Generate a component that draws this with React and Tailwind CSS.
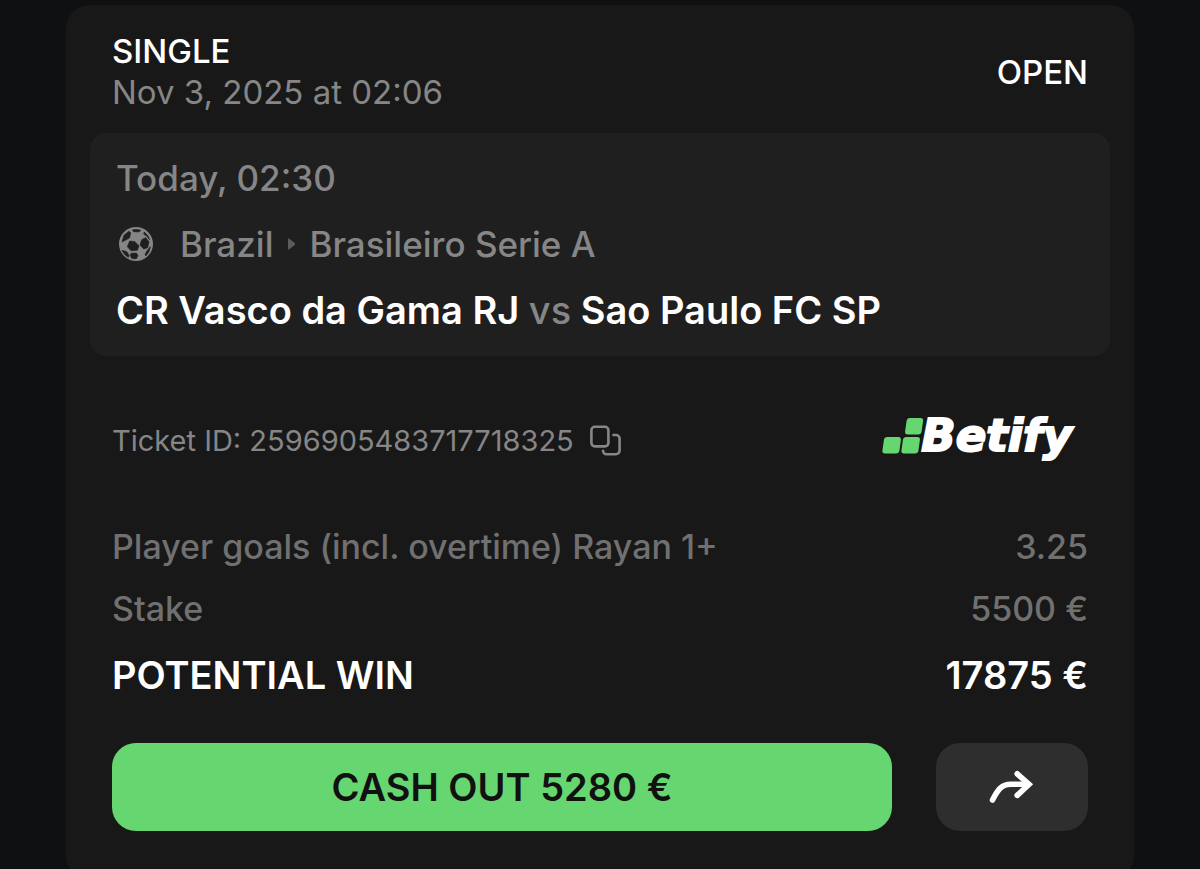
import React from "react";

const bet = {
  type: "SINGLE",
  placedAt: "Nov 3, 2025 at 02:06",
  status: "OPEN",
  startsAt: "Today, 02:30",
  country: "Brazil",
  league: "Brasileiro Serie A",
  home: "CR Vasco da Gama RJ",
  away: "Sao Paulo FC SP",
  ticketId: "2596905483717718325",
  market: "Player goals (incl. overtime) Rayan 1+",
  odds: "3.25",
  stake: "5500 €",
  win: "17875 €",
  cashOut: "5280 €",
};

const BallIcon = () => (
  <svg className="size-10" viewBox="13 9 120 120" aria-hidden="true">
    <circle cx="73" cy="69" r="51" fill="currentColor" />
    {/* light panels of the ball */}
    <g fill="#1f1f1f" stroke="#1f1f1f" strokeWidth="2" strokeLinejoin="round">
      <path d="M54 60 70 62 82 75 77 88 58 89 47 77z" />
      <path d="M90 56 102 50 112 62 108 80 96 84 85 72z" />
      <path d="M37 43 51 31 57 35 54 50 41 58 31 63z" />
      <path d="M62 27Q74 23 88 28L80 33 66 32z" />
      <path d="M98 33Q110 43 114 56L104 44 96 39z" />
      <path d="M31 88 45 92 52 103 50 109Q37 102 31 88z" />
      <path d="M58 97 74 96 79 104 74 113Q66 114 60 112L56 104z" />
      <path d="M106 90 116 77Q114 94 102 105L101 98z" />
    </g>
  </svg>
);

const CopyIcon = () => (
  <svg className="h-9 w-8" viewBox="0 0 32 36" fill="none" stroke="currentColor" strokeWidth="2.6" strokeLinecap="round" aria-hidden="true">
    <rect x="1.4" y="3.8" width="17" height="19.6" rx="3.4" />
    <path d="M23.4 12H26a3.6 3.6 0 0 1 3.6 3.6v12a3.6 3.6 0 0 1-3.6 3.6H16.6a3.6 3.6 0 0 1-3.6-3.4" />
  </svg>
);

const ShareIcon = () => (
  <svg className="h-9 w-12" viewBox="0 0 48 36" fill="none" stroke="currentColor" strokeWidth="5.6" strokeLinecap="round" strokeLinejoin="miter" aria-hidden="true">
    <path d="M4.5 31C9.5 21.5 13 15.3 23 15.3H40" />
    <path d="M29.2 4.8 41 15.3 29.2 26.4" />
  </svg>
);

const Logo = () => (
  <div className="flex items-center pr-4 pb-[10px] text-white">
    <svg className="h-9 w-10 overflow-visible" viewBox="0 0 40 36" fill="#66d670" aria-hidden="true">
      <g transform="translate(6 0) skewX(-8)">
        <rect x="20" y="0" width="16.5" height="16.5" rx="3" />
        <rect x="0" y="19" width="17" height="16.5" rx="3" />
        <rect x="19" y="19" width="17" height="16.5" rx="3" />
      </g>
    </svg>
    <span className="font-['DejaVu_Sans','Inter',sans-serif] text-[45px] leading-12 font-bold italic [-webkit-text-stroke:2px_#fff]">
      Betify
    </span>
  </div>
);

const App = () => {
  return (
    <div className="h-screen overflow-hidden bg-[#0f1012] px-4 pt-[5px] font-['Inter','Liberation_Sans',sans-serif] text-[34px] leading-10 text-[#868686] sm:px-[66px]">
      <main className="rounded-3xl bg-[#181818] px-6 pt-[26px] pb-12">
        <header className="flex items-center justify-between px-[22px] text-[33px] leading-[41px] font-medium">
          <div>
            <h1 className="text-white">{bet.type}</h1>
            <p className="font-normal">{bet.placedAt}</p>
          </div>
          <span className="text-white">{bet.status}</span>
        </header>

        <section className="mt-5 flex flex-col gap-[26px] rounded-2xl bg-[#1f1f1f] px-[26px] pt-[25px] pb-[26px] text-[35px] font-medium">
          <p>{bet.startsAt}</p>
          <div className="flex items-center">
            <BallIcon />
            <span className="ml-6">{bet.country}</span>
            <svg className="mx-3 h-3 w-3" viewBox="0 0 12 12" fill="#5c5c5c" aria-hidden="true">
              <path d="M3 1.2v9.6q0 1.2 1 .6L9.6 7q1-1 0-2L4 .6Q3 0 3 1.2z" />
            </svg>
            <span>{bet.league}</span>
          </div>
          <h2 className="text-[38px] font-semibold text-white">
            {bet.home} <span className="font-medium text-[#868686]">vs</span> {bet.away}
          </h2>
        </section>

        <div className="mt-[61px] flex h-12 items-center justify-between px-[22px]">
          <div className="flex items-center gap-4 text-[29px]">
            <span>Ticket ID: {bet.ticketId}</span>
            <button type="button" aria-label="Copy ticket ID" className="cursor-pointer">
              <CopyIcon />
            </button>
          </div>
          <Logo />
        </div>

        <dl className="mt-[62px] flex flex-col gap-[22px] px-[22px] font-medium text-[#707070]">
          <div className="flex justify-between">
            <dt>{bet.market}</dt>
            <dd>{bet.odds}</dd>
          </div>
          <div className="flex justify-between">
            <dt>Stake</dt>
            <dd>{bet.stake}</dd>
          </div>
          <div className="flex justify-between text-[38px] leading-12 font-semibold text-white">
            <dt>POTENTIAL WIN</dt>
            <dd>{bet.win}</dd>
          </div>
        </dl>

        <div className="mt-11 flex gap-11 px-[22px]">
          <button type="button" className="h-22 flex-1 cursor-pointer rounded-3xl bg-[#66d670] text-[38px] font-semibold text-[#111]">
            CASH OUT {bet.cashOut}
          </button>
          <button
            type="button"
            aria-label="Share bet"
            className="flex h-22 w-[152px] cursor-pointer items-center justify-center rounded-3xl bg-[#2e2e2e] text-white"
          >
            <ShareIcon />
          </button>
        </div>
      </main>
    </div>
  );
};

export default App;
